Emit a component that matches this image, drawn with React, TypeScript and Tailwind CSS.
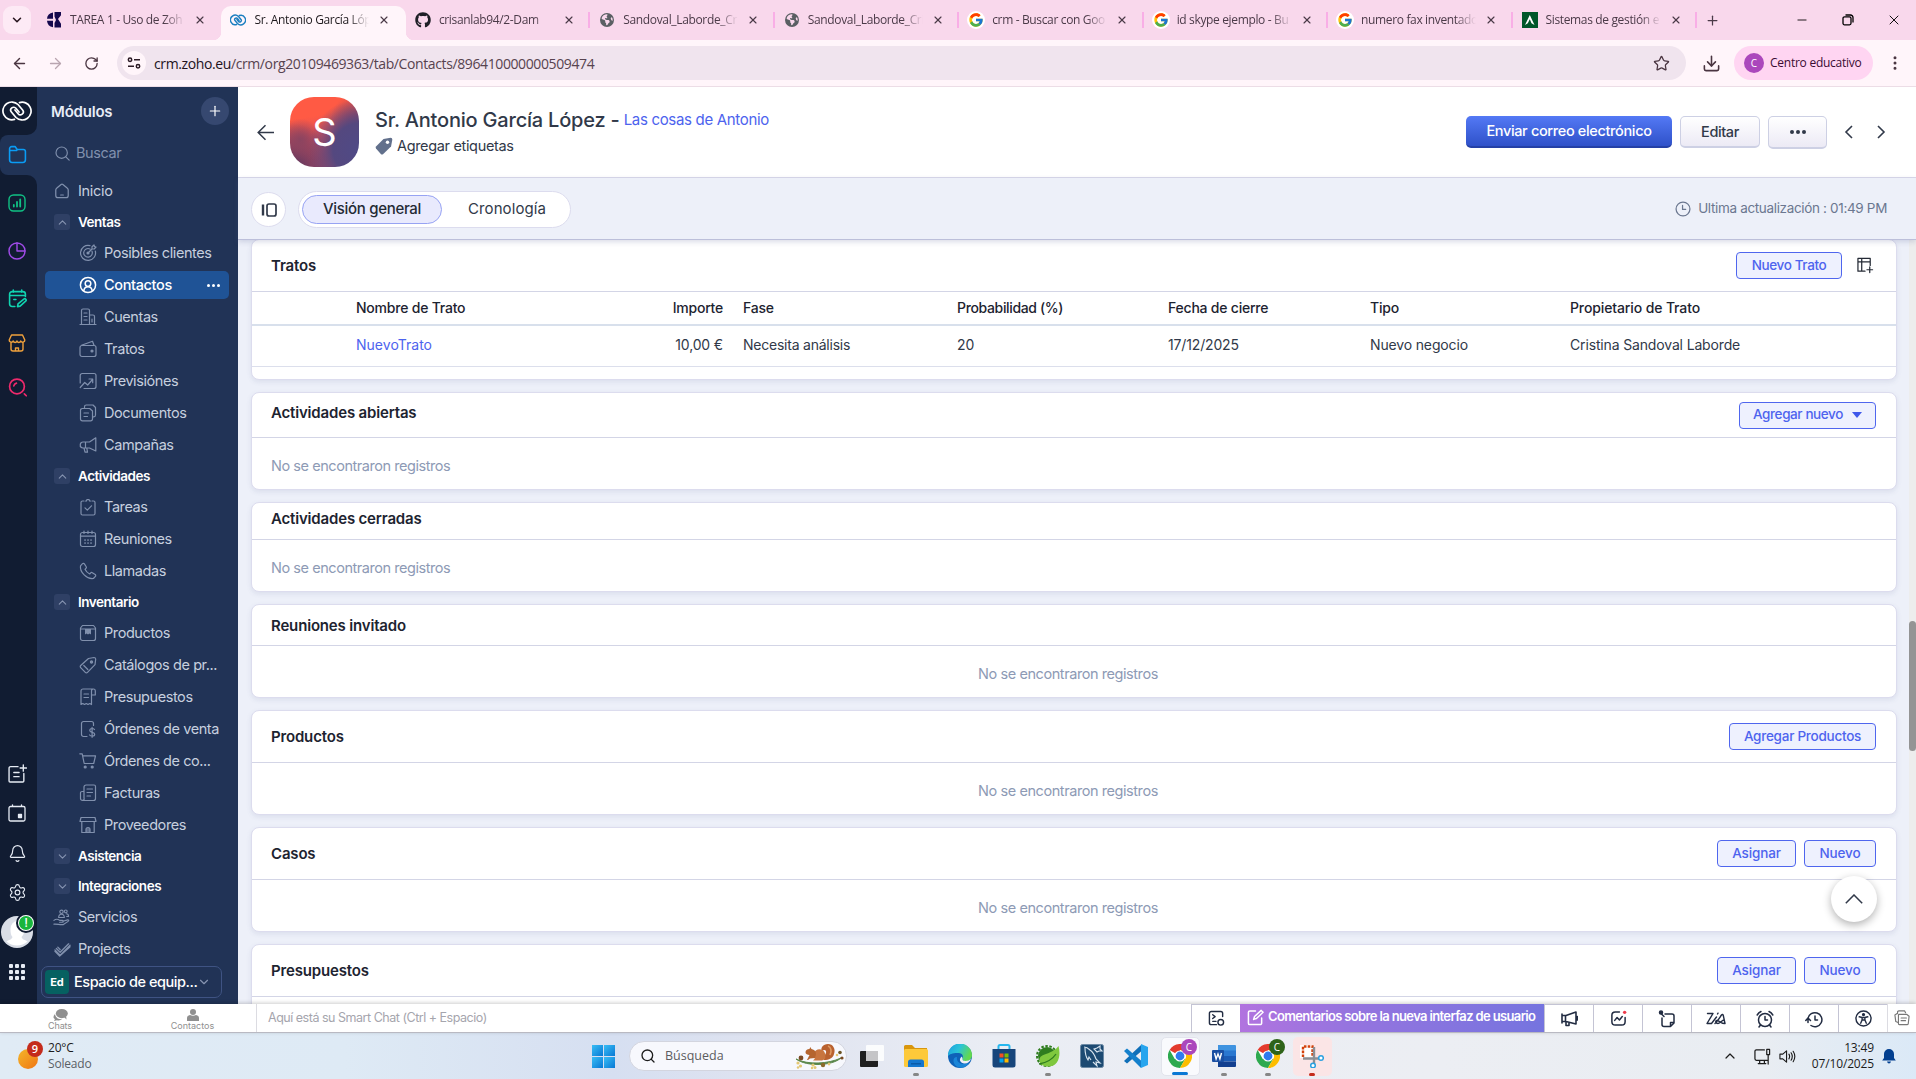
import React from "react";
import {
  ArrowLeft, ArrowRight, RotateCw, Star, Download, EllipsisVertical, Plus, X, ChevronDown, ChevronUp,
  Search, Minus, Bell, Settings,
} from "lucide-react";
import { FaGithub, FaEarthAmericas } from "react-icons/fa6";
import { FcGoogle } from "react-icons/fc";

type Kids = { children?: React.ReactNode };

function Ico({ children, size = 18, sw = 1.2, className = "" }: Kids & { size?: number; sw?: number; className?: string }) {
  return (
    <svg width={size} height={size} viewBox="0 0 18 18" fill="none" stroke="currentColor" strokeWidth={sw}
      strokeLinecap="round" strokeLinejoin="round" className={"shrink-0 " + className}>
      {children}
    </svg>
  );
}

/* ---------- Browser ---------- */

function ZohoLoop({ color, w, h, sw }: { color: string; w: number; h: number; sw: number }) {
  return (
    <svg width={w} height={h} viewBox="0 0 30 22" fill="none" stroke={color} strokeWidth={sw} strokeLinecap="round" strokeLinejoin="round">
      <path d="M12.500 19.400A8.900 8.900 0 1 1 16 4.500L20.600 10a2.900 2.900 0 0 1-4.500 3.700L13 10" />
      <path d="M17.500 2.600A8.900 8.900 0 1 1 14 17.500L9.400 12a2.900 2.900 0 0 1 4.500-3.700L17 12" />
    </svg>
  );
}

const google = <span className="flex size-[18px] items-center justify-center rounded-full bg-white"><FcGoogle size={16} /></span>;
const globe = <FaEarthAmericas size={14} color="#5a5f63" />;

const tabs: { t: string; icon: React.ReactNode; active?: boolean; sep?: boolean }[] = [
  { t: "TAREA 1 - Uso de Zoh", icon: (
    <svg width="15" height="16" viewBox="0 0 15 16" fill="#15084d"><path d="M0 6.800A7 7 0 0 1 6 .5v6.300zM0 8.800h6v6.400a7 7 0 0 1-6-6.400zM7.500 0H14v3.200L11 7 14 11.800V15.500H7.500V11l1.500-3-1.500-3.400z" /></svg>) },
  { t: "Sr. Antonio García Lóp", icon: <ZohoLoop color="#1c7fc0" w={16} h={14} sw={2.600} />, active: true },
  { t: "crisanlab94/2-Dam", icon: <FaGithub size={16} color="#1f1f27" />, sep: true },
  { t: "Sandoval_Laborde_Cri", icon: globe, sep: true },
  { t: "Sandoval_Laborde_Cri", icon: globe, sep: true },
  { t: "crm - Buscar con Goo", icon: google, sep: true },
  { t: "id skype ejemplo - Bu", icon: google, sep: true },
  { t: "numero fax inventado", icon: google, sep: true },
  { t: "Sistemas de gestión e", icon: (
    <svg width="16" height="16" viewBox="0 0 16 16"><rect width="16" height="16" fill="#00572a" /><path d="M3 13 7.800 3l4.700 10-3-1.800-1.700-4-2 4z" fill="#fff" /></svg>), sep: true },
];

function TabStrip() {
  return (
    <div className="flex h-10 items-center bg-[#f9d8ec] font-[Open_Sans,sans-serif] text-[#4b3a48]">
      <div className="ml-[3px] flex h-7 w-7 shrink-0 items-center justify-center rounded-[9px] bg-[#fdeaf5]">
        <ChevronDown size={14} strokeWidth={2.600} className="text-[#27161f]" />
      </div>
      <div className="ml-[6px] flex h-full">
        {tabs.map((tab, i) => (
          <div key={i} className="relative flex h-full w-[184.450px] items-center">
            {tab.active && (
              <div className="absolute inset-x-0 bottom-0 top-[6px] rounded-t-[10px] bg-[#fff5fa]">
                <div className="absolute bottom-0 -left-2 size-2 bg-[radial-gradient(circle_at_0_0,#f9d8ec_8px,#fff5fa_8.500px)]" />
                <div className="absolute bottom-0 -right-2 size-2 bg-[radial-gradient(circle_at_100%_0,#f9d8ec_8px,#fff5fa_8.500px)]" />
              </div>
            )}
            <div className="relative ml-[8px] flex w-[18px] justify-center">{tab.icon}</div>
            <div className={"relative ml-[7px] w-[115px] whitespace-nowrap text-[12px] tracking-[-0.350px] [mask-image:linear-gradient(90deg,#000_82%,transparent)] " + (tab.active ? "text-[#1f1a1e]" : "")}>{tab.t}</div>
            <X size={12} strokeWidth={2.300} className="relative ml-[9px]" />
            {tab.sep && <div className="absolute right-0 h-4 w-[2px] bg-[#f9aee6]" />}
          </div>
        ))}
      </div>
      <Plus size={15} strokeWidth={2} className="ml-[8px]" />
      <div className="ml-auto flex items-center text-black">
        <Minus size={14} strokeWidth={1.500} />
        <svg width="12" height="12" viewBox="0 0 12 12" fill="none" stroke="#000" strokeWidth="1.300" className="ml-[33px]"><rect x="1" y="2.800" width="8" height="8" rx="1.500" /><path d="M3.500 1h5A2.500 2.500 0 0 1 11 3.500v5" /></svg>
        <X size={16} strokeWidth={1.400} className="ml-[32px] mr-[14px]" />
      </div>
    </div>
  );
}

function AddressBar() {
  return (
    <div className="flex h-[47px] items-center border-b border-[#ecdde6] bg-[#fff5fa] font-[Open_Sans,sans-serif] text-[#57434f]">
      <ArrowLeft size={17} strokeWidth={2} className="ml-[11px] text-[#4a3541]" />
      <ArrowRight size={17} strokeWidth={1.800} className="ml-[19px] text-[#b9a5b0]" />
      <RotateCw size={15} strokeWidth={2.100} className="ml-[20px] text-[#4a3541]" />
      <div className="ml-[18px] flex h-[34px] w-[1569px] items-center rounded-full bg-[#f0e4ee] pl-[5px]">
        <div className="flex size-6 items-center justify-center rounded-full bg-[#fff5fa]">
          <svg width="14" height="12" viewBox="0 0 14 12" fill="none" stroke="#2c1c26" strokeWidth="1.500"><circle cx="3" cy="2.700" r="1.700" /><path d="M7 2.700h6M1 9.300h6" /><circle cx="11" cy="9.300" r="1.700" /></svg>
        </div>
        <div className="ml-2 whitespace-nowrap text-[14px] tracking-[-0.390px]"><span className="text-[#21121c]">crm.zoho.eu</span>/crm/org20109469363/tab/Contacts/896410000000509474</div>
        <Star size={17} strokeWidth={1.800} className="ml-auto mr-[16px] text-[#4a3541]" />
      </div>
      <Download size={19} strokeWidth={2} className="ml-[16px] text-[#4a3541]" />
      <div className="ml-[13px] flex h-[34px] w-[139px] items-center rounded-full bg-[#ffd5f2] pl-[10px]">
        <div className="flex size-5 items-center justify-center rounded-full bg-[#ab47bc] text-[10px] text-white">C</div>
        <div className="ml-[6px] whitespace-nowrap text-[12px] tracking-[-0.250px] text-[#3a0b33]">Centro educativo</div>
      </div>
      <EllipsisVertical size={18} strokeWidth={2} className="ml-[13px] text-[#4a3541]" />
    </div>
  );
}

/* ---------- Left rail ---------- */

function Rail() {
  return (
    <div className="flex w-[37px] shrink-0 flex-col bg-[#213356]">
      <div className="flex h-12 items-center justify-center rounded-br-[10px] bg-[#111c32] pr-[3px]">
        <ZohoLoop color="#fff" w={30} h={22} sw={1.700} />
      </div>
      <div className="h-10 bg-[#111c32]">
        <div className="flex h-full items-center rounded-l-[8px] bg-[#213356] pb-[1px] pl-[8px]">
          <Ico size={19} sw={1.500} className="text-[#0a9cf5]"><path d="M1.500 14V3.500a2 2 0 0 1 2-2h3.200l2 2.700h5.800a2 2 0 0 1 2 2V14a2.500 2.500 0 0 1-2.500 2.500H4A2.500 2.500 0 0 1 1.500 14zM1.500 5.200h6.800" /></Ico>
        </div>
      </div>
      <div className="flex flex-1 flex-col items-center rounded-tr-[10px] bg-[#111c32] pr-[3px]">
        <Ico size={18} sw={1.400} className="mt-[19px] text-[#10c184]"><rect x="1" y="1" width="16" height="16" rx="4.500" /><path d="M5.800 12.500v-1.500M9 12.500V8M12.200 12.500v-7" strokeWidth="1.800" /></Ico>
        <Ico size={18} sw={1.400} className="mt-[30px] text-[#a04be8]"><circle cx="9" cy="9" r="8" /><path d="M9 1v8h8" /></Ico>
        <Ico size={19} sw={1.500} className="mt-[29px] text-[#10d3b0]"><path d="M16.500 7V5a2.500 2.500 0 0 0-2.500-2.500H4A2.500 2.500 0 0 0 1.500 5v9A2.500 2.500 0 0 0 4 16.500h2.500M1.500 6.200h15M5 1v2M13 1v2M5.500 10h2M9.500 14l5.500-4.500a1.300 1.300 0 0 1 1.700 2L11.500 16.200l-2.500.5z" /></Ico>
        <Ico size={18} sw={1.400} className="mt-[26px] text-[#f0a13c]"><path d="M3.500 1h11L16.800 6c.2 2.200-3 3-4 1-1 2-3 2-3.800 0-.8 2-2.800 2-3.800 0-1 2-4.200 1.200-4-1zM3 8.500V15a2 2 0 0 0 2 2h8a2 2 0 0 0 2-2V8.500M7.500 17v-3h3v3" /></Ico>
        <Ico size={19} sw={1.600} className="mt-[26px] text-[#ef2a6c]"><circle cx="8.500" cy="8" r="7" /><path d="M5.500 7.500a3.500 3.500 0 0 1 2.500-2.600M15.500 15l1.800 1.800" /></Ico>
        <div className="mt-auto flex flex-col items-center text-[#e6ebf4]">
          <Ico size={19} sw={1.300} className="mb-[21px]"><path d="M9.500 2.500h-7a1.500 1.500 0 0 0-1.500 1.500v12a1 1 0 0 0 1 1h12a1 1 0 0 0 1-1V9M5.500 8h5M5.500 12h5M14.500.8v6M11.500 3.800h6" /></Ico>
          <Ico size={18} sw={1.300} className="mb-[22px]"><rect x="1" y="2.500" width="16" height="14.500" rx="1.500" /><path d="M4.500.8v1.500M13.500.8v1.500" /><rect x="10.500" y="10.500" width="3" height="3" fill="currentColor" /></Ico>
          <Bell size={19} strokeWidth={1.500} className="mb-[20px]" />
          <Settings size={19} strokeWidth={1.400} className="mb-[14px]" />
          <div className="relative mb-[16px] size-8 overflow-visible rounded-full">
            <svg width="32" height="32" viewBox="0 0 32 32"><circle cx="16" cy="16" r="16" fill="#d9dde6" /><path d="M9.500 13a7 8 0 0 1 14 0c0 4-1.500 6.500-3 8 .5 2.500 4 3 6 4.500a16 16 0 0 1-21 0c2-1.500 5.500-2 6-4.500-1.500-1.500-2-4-2-8z" fill="#fff" /></svg>
            <div className="absolute -top-[3px] left-[15px] flex size-[20px] items-center justify-center rounded-full border-[2px] border-[#111c32] bg-white">
              <div className="flex size-[14px] items-center justify-center rounded-full bg-[#18b53c] font-[Roboto,sans-serif] text-[12px] font-medium leading-none text-white">!</div>
            </div>
          </div>
          <div className="mb-[24px] grid grid-cols-3 gap-[2px]">
            {Array.from({ length: 9 }, (_, i) => <div key={i} className="size-[4px] rounded-[1px] bg-[#e6ebf4]" />)}
          </div>
        </div>
      </div>
    </div>
  );
}

/* ---------- Sidebar ---------- */

const navIcons: Record<string, React.ReactNode> = {
  "Posibles clientes": <Ico><path d="M11 1.700A7.500 7.500 0 1 0 16.300 7M11 5A4.300 4.300 0 1 0 13 7.200M9 9l4-4M13 5V2.800l2-1.800.5 1.500 1.500.5-1.800 2zM9 8a1 1 0 1 0 1 1" /></Ico>,
  Contactos: <Ico><circle cx="9" cy="9" r="7.600" strokeWidth="1.500" /><circle cx="9" cy="7.600" r="2.800" strokeWidth="1.500" /><path d="M4.800 14.500c.5-2.500 1.800-3.800 4.200-3.800s3.700 1.300 4.200 3.800" strokeWidth="1.500" /></Ico>,
  Cuentas: <Ico><path d="M1 16.500h16M2.500 16.500V2.500a1.500 1.500 0 0 1 1.500-1.500h5a1.500 1.500 0 0 1 1.500 1.500v14M10.500 7h3.500a1.500 1.500 0 0 1 1.500 1.500v8M5 5h3M5 8.500h3M5 12h3M13 11v3" /></Ico>,
  Tratos: <Ico><rect x="1" y="5.500" width="16" height="11" rx="2" /><path d="M2.500 5.300 13.500 1.300l1.500 4" /><circle cx="13" cy="11" r="1" fill="currentColor" /></Ico>,
  Previsiónes: <Ico><path d="M1.200 11V3.500A2 2 0 0 1 3.200 1.500H15a2 2 0 0 1 2 2V14.500a2 2 0 0 1-2 2H5M1.200 15.500l4.500-5 3 2.500 4.800-5.500M10 7h3.700v3.700" /></Ico>,
  Documentos: <Ico><path d="M5.500 4V2.800A1.800 1.800 0 0 1 7.300 1H14l2.500 2.500V11a1.800 1.800 0 0 1-1.800 1.800h-1" /><path d="M3.300 4.500h7.400L13.500 7v8a1.800 1.800 0 0 1-1.800 1.800H3.300A1.800 1.800 0 0 1 1.500 15V6.300a1.800 1.800 0 0 1 1.800-1.800zM5 9h4.500M5 12.500h3.500" /></Ico>,
  Campañas: <Ico><path d="M16.800 1.800v13.200L10.500 12H4a2.700 2.700 0 0 1-2.700-2.700v-.6A2.700 2.700 0 0 1 4 6h6.500zM6.500 6v6M5 12.200l1 4h2.500l-.7-4M1.300 8v2.500" /></Ico>,
  Tareas: <Ico><path d="M5 3H3.500a1.500 1.500 0 0 0-1.500 1.500v11A1.500 1.500 0 0 0 3.500 17h11a1.500 1.500 0 0 0 1.500-1.500v-11A1.500 1.500 0 0 0 14.500 3H13M6.500 3h1l.5-1.500h2l.5 1.500h1M6 9.800l2.300 2.300 4.200-4.300" /></Ico>,
  Reuniones: <Ico><rect x="1.500" y="2.500" width="15" height="14" rx="2" /><path d="M1.500 6.200h15M5 1v2.500M9 1v2.500M13 1v2.500" /><path d="M6 10h.1M9 10h.1M12 10h.1M6 13h.1M9 13h.1M12 13h.1" strokeWidth="1.700" /></Ico>,
  Llamadas: <Ico><path d="M1.500 3.800 3.500 1.700a1.200 1.200 0 0 1 1.900.2l1.800 2.800a1.300 1.300 0 0 1-.2 1.600L6 7.300c1 2.200 2.600 3.700 4.700 4.700l1-1.100a1.300 1.300 0 0 1 1.600-.2l2.900 1.900a1.200 1.200 0 0 1 .2 1.800l-2 2.100C8 17.500.5 10 1.500 3.800z" /></Ico>,
  Productos: <Ico><path d="M3.500 1.500h11l2 2.500v10.500a2 2 0 0 1-2 2h-11a2 2 0 0 1-2-2V4zM1.500 5h15" /><path d="M6 5h6v5.500l-1.500-1-1.500 1-1.500-1-1.500 1z" fill="currentColor" stroke="none" /></Ico>,
  "Catálogos de pr...": <Ico><path d="M9.500 2.500 15 1.500c1 0 1.600.6 1.700 1.500L16 8.700l-7.500 7.600a1.500 1.500 0 0 1-2.200 0L1.700 11.700a1.500 1.500 0 0 1 0-2.200zM4.800 9.500l4 4" /><circle cx="12.500" cy="6" r="1.100" fill="currentColor" /></Ico>,
  Presupuestos: <Ico><path d="M12.500 13.500V3a1.800 1.800 0 0 1 3.800-.2V7h-3.800M14.500 1H4A2 2 0 0 0 2 3v13.500l1.800-1 1.700 1 1.800-1 1.700 1 1.800-1 1.700 1V12M5 6h4.500M5 9.500h4.500" /></Ico>,
  "Órdenes de venta": <Ico><path d="M8 16.500H4.500a2 2 0 0 1-2-2v-11a2 2 0 0 1 2-2h8a2 2 0 0 1 2 2v2" /><path d="M15.500 9.500c-.6-.9-1.500-1-2.500-1-1.300 0-2.200.7-2.200 1.900 0 2.700 4.900 1.200 4.900 3.900 0 1.200-1 1.900-2.500 1.900-1.200 0-2-.4-2.600-1.200M13.100 7.300v10" /></Ico>,
  "Órdenes de co...": <Ico><path d="M.8 1.800h2.400l2 9.700h9.500l1.800-7.700H3.600" /><circle cx="6.200" cy="15" r="1" fill="currentColor" /><circle cx="13.200" cy="15" r="1" fill="currentColor" /></Ico>,
  Facturas: <Ico><path d="M5 14V3a2 2 0 0 1 2-2h8a1.500 1.500 0 0 1 1.500 1.500v12a2 2 0 0 1-2 2h-11a2 2 0 0 1-2-2V9a1.500 1.500 0 0 1 1.500-1.500h2M5 14a1.600 1.600 0 0 1-1.500 2.400M8 5h5.500M8 8.500h5.500M8 12h3.500" /></Ico>,
  Proveedores: <Ico><path d="M2 1.500h14l1 4H1zM2.800 5.500v11h12.400v-11" /><path d="M7 16.500v-3a2 2 0 0 1 4 0v3z" fill="currentColor" fillOpacity=".6" /></Ico>,
};

function NavItem({ label }: { label: string }) {
  const active = label === "Contactos";
  return (
    <div className="flex h-8 items-center">
      <div className={"ml-2 flex h-7 w-[184px] items-center rounded-[5px] pl-[34px] " + (active ? "bg-[#1f5396] text-white" : "text-[#c6cfdf]")}>
        <span className={active ? "" : "text-[#8090ad]"}>{navIcons[label]}</span>
        <span className={"ml-[7px] whitespace-nowrap text-[14.500px] " + (active ? "font-medium tracking-[-0.350px]" : "tracking-[-0.420px]")}>{label}</span>
        {active && <span className="ml-auto mr-[9px] flex gap-[2px]"><i className="size-[3px] rounded-full bg-white" /><i className="size-[3px] rounded-full bg-white" /><i className="size-[3px] rounded-full bg-white" /></span>}
      </div>
    </div>
  );
}

function Group({ label, open, items = [] }: { label: string; open?: boolean; items?: string[] }) {
  return (
    <>
      <div className="flex h-[30px] items-center pl-[17px]">
        <div className="flex size-4 items-center justify-center rounded-[3px] bg-[#2f4065] text-[#8794b1]">
          {open ? <ChevronUp size={13} strokeWidth={2} /> : <ChevronDown size={13} strokeWidth={2} />}
        </div>
        <span className="ml-2 text-[13.500px] font-semibold tracking-[-0.480px] text-white">{label}</span>
      </div>
      {items.map((i) => <NavItem key={i} label={i} />)}
    </>
  );
}

function Sidebar() {
  return (
    <div className="flex w-[201px] shrink-0 flex-col bg-[#213356]">
      <div className="flex h-12 items-center pl-[14px] pr-[9px]">
        <span className="pt-[2px] text-[15px] font-semibold tracking-[-0.200px] text-[#e8edf7]">Módulos</span>
        <div className="ml-auto flex size-7 items-center justify-center rounded-full bg-[#364870] text-white"><Plus size={16} strokeWidth={1.800} /></div>
      </div>
      <div className="flex h-10 items-center pb-[4px] pl-[18px] text-[#8090ad]">
        <Ico size={15} sw={1.400}><circle cx="8" cy="8" r="6.800" /><path d="m13 13 4 4" /></Ico>
        <span className="ml-[6px] text-[14.500px] tracking-[-0.400px]">Buscar</span>
      </div>
      <div className="flex h-8 items-center pl-[17px] text-[#8090ad]">
        <Ico size={16} sw={1.400}><path d="M2 8c0-1 .4-1.800 1.200-2.400L8 1.600a1.600 1.600 0 0 1 2 0l4.800 4c.8.600 1.200 1.400 1.200 2.400v6a2.500 2.500 0 0 1-2.500 2.500h-9A2.500 2.500 0 0 1 2 14zM7.500 13.500h3" /></Ico>
        <span className="ml-2 text-[14.500px] tracking-[-0.300px] text-[#c6cfdf]">Inicio</span>
      </div>
      <Group label="Ventas" open items={["Posibles clientes", "Contactos", "Cuentas", "Tratos", "Previsiónes", "Documentos", "Campañas"]} />
      <Group label="Actividades" open items={["Tareas", "Reuniones", "Llamadas"]} />
      <Group label="Inventario" open items={["Productos", "Catálogos de pr...", "Presupuestos", "Órdenes de venta", "Órdenes de co...", "Facturas", "Proveedores"]} />
      <Group label="Asistencia" />
      <Group label="Integraciones" />
      <div className="flex h-8 items-center pl-[16px] text-[#8090ad]">
        <Ico size={17}><circle cx="9" cy="3" r="1.800" /><circle cx="13.500" cy="2.500" r="1.500" /><path d="M6 9c0-2.500 1-3.500 3-3.500S12 6.500 12 9zM14 5c1.800 0 2.500 1 2.500 3h-2M1 12c2-1.500 4-1.500 6 0h3a1 1 0 0 1 0 2H7M10.500 13l5-1.500c1.500 0 1.500 1 .5 1.600L11 16.500c-4 .5-6-.8-10-.5" /></Ico>
        <span className="ml-2 text-[14.500px] tracking-[-0.450px] text-[#c6cfdf]">Servicios</span>
      </div>
      <div className="flex h-8 items-center pl-[17px] text-[#8090ad]">
        <Ico size={17} sw={1.400}><path d="M1 9.500 6.500 15 17 4.500M2.500 8 6.500 12 15.500 3M4 6.500 6.500 9M1 11l5 5L17 6" /></Ico>
        <span className="ml-[7px] text-[14.500px] tracking-[-0.400px] text-[#c6cfdf]">Projects</span>
      </div>
      <div className="ml-1 mt-px flex h-8 w-[181px] items-center rounded-[7px] border border-[#3f5383] pl-[3px]">
        <div className="flex size-6 items-center justify-center rounded-[4px] bg-[#066161] text-[11px] font-bold text-white">Ed</div>
        <span className="ml-[5px] whitespace-nowrap text-[14.500px] font-medium tracking-[-0.450px] text-white">Espacio de equip...</span>
        <ChevronDown size={14} strokeWidth={2} className="shrink-0 text-[#8794b1]" />
      </div>
    </div>
  );
}

/* ---------- Main ---------- */

function ContactHeader() {
  return (
    <div className="flex h-[91px] shrink-0 items-center border-b border-[#d8d8ea] bg-white text-[#313949]">
      <svg width="17" height="17" viewBox="0 0 17 17" fill="none" stroke="#313949" strokeWidth="1.500" className="ml-[19px]"><path d="M17 8.500H1.500M8.500 1.200 1.200 8.500l7.300 7.300" /></svg>
      <div className="ml-[16px] flex h-[70px] w-[69px] items-center justify-center rounded-[24px] bg-[radial-gradient(circle_at_100%_75%,#4f4a86_0%,#54487f_30%,transparent_58%),radial-gradient(circle_at_15%_62%,#8b4460_0%,transparent_30%),radial-gradient(circle_at_0%_100%,#54355f_0%,transparent_45%),radial-gradient(circle_at_100%_35%,#933f60_0%,transparent_35%),linear-gradient(170deg,#ff5a44_28%,#d94e58_55%,#a34a67_100%)] text-[38px] text-white">S</div>
      <div className="ml-[16px] flex flex-col pt-[2px]">
        <div className="flex h-[26px] items-center whitespace-nowrap">
          <span className="text-[20px] font-medium tracking-[-0.200px]">Sr. Antonio García López -</span>
          <span className="ml-[4px] pt-[1px] text-[15px] tracking-[-0.320px] text-[#4d63ee]">Las cosas de Antonio</span>
        </div>
        <div className="flex h-[26px] items-center">
          <svg width="18" height="18" viewBox="0 0 18 18"><path d="M8.500 2 15.500.800q2 0 1.800 2L16 9.500 8 17.200q-1 .8-2 0L1 11.500q-.8-1 0-2z" fill="#62708c" /><circle cx="12.500" cy="5.200" r="1.700" fill="#fff" /></svg>
          <span className="ml-[4px] text-[14.500px] tracking-[-0.340px]">Agregar etiquetas</span>
        </div>
      </div>
      <div className="ml-auto flex items-center gap-2 text-[14.500px] font-medium">
        <div className="flex h-8 w-[206px] items-center justify-center rounded-[5px] border-b-2 border-[#2440a6] bg-linear-to-b from-[#5479f5] to-[#2f51c9] tracking-[-0.350px] text-white">Enviar correo electrónico</div>
        <div className="flex h-8 w-20 items-center justify-center rounded-[5px] border border-b-2 border-[#cdd0e4] bg-linear-to-b from-white to-[#eceaf5] tracking-[-0.400px]">Editar</div>
        <div className="flex h-[33px] w-[59px] items-center justify-center gap-[2px] rounded-[5px] border border-b-2 border-[#cdd0e4] bg-linear-to-b from-white to-[#eceaf5]">
          <i className="size-1 rounded-full bg-[#313949]" /><i className="size-1 rounded-full bg-[#313949]" /><i className="size-1 rounded-full bg-[#313949]" />
        </div>
      </div>
      <svg width="9" height="14" viewBox="0 0 9 14" fill="none" stroke="#313949" strokeWidth="1.600" className="ml-[17px]"><path d="M8 1 2 7l6 6" /></svg>
      <svg width="9" height="14" viewBox="0 0 9 14" fill="none" stroke="#313949" strokeWidth="1.600" className="ml-[24px] mr-[30px]"><path d="m1 1 6 6-6 6" /></svg>
    </div>
  );
}

function ViewSwitch() {
  return (
    <div className="relative z-10 flex h-[62px] shrink-0 items-center border-b border-[#bcbfda] bg-[#edf0f9] text-[#313949] shadow-[0_2px_5px_rgba(90,100,150,0.220)]">
      <div className="ml-[13px] mt-[2px] flex size-[35px] items-center justify-center rounded-full border border-[#dcdcee] bg-white">
        <svg width="16" height="14" viewBox="0 0 16 14" fill="none" stroke="#313949" strokeWidth="1.700"><path d="M2 1.500v11" strokeWidth="2.400" /><rect x="6" y="1" width="9" height="12" rx="2" /></svg>
      </div>
      <div className="ml-[12px] mt-px flex h-[37px] w-[273px] items-center rounded-full border border-[#dcdcee] bg-white pl-[3px] text-[15px]">
        <div className="flex h-[29px] w-[140px] items-center justify-center rounded-full border border-[#97a3f3] bg-[#e9eafd] font-medium tracking-[-0.300px] text-[#242a35]">Visión general</div>
        <div className="ml-[26px] tracking-[0.100px]">Cronología</div>
      </div>
      <div className="ml-auto mr-[29px] flex items-center text-[#6b7790]">
        <Ico size={16} sw={1.400}><circle cx="9" cy="9" r="7.800" /><path d="M8.500 5v4.500H12" /></Ico>
        <span className="ml-[7px] text-[13.500px] tracking-[-0.340px]">Ultima actualización : 01:49 PM</span>
      </div>
    </div>
  );
}

function Btn({ children, w, track = "tracking-[-0.250px]" }: Kids & { w: string; track?: string }) {
  return <div className={"flex h-[27px] items-center justify-center rounded-[4px] border border-[#4f66ee] bg-[#eef1fe] pb-px text-[13.500px] font-medium text-[#4d63ee] " + track + " " + w}>{children}</div>;
}

const cardBase = "flex shrink-0 flex-col rounded-[8px] border border-[#dcdcee] bg-white shadow-[0_2px_5px_rgba(90,100,150,0.120)] ";
const titleText = "text-[15px] font-semibold tracking-[-0.170px] text-[#1d2330] ";

function Card({ title, h, head, actions, centered, shift = "pt-[2px]" }: { title: string; h: string; head: string; actions?: React.ReactNode; centered?: boolean; shift?: string }) {
  return (
    <div className={cardBase + "mt-[12px] " + h}>
      <div className={"flex shrink-0 items-center border-b border-[#d3d5e6] pl-[19px] pr-[20px] " + head}>
        <span className={titleText + shift}>{title}</span>
        <div className="ml-auto flex gap-2">{actions}</div>
      </div>
      <div className={"flex flex-1 items-center pl-[19px] text-[14.500px] text-[#8d9ab5] " + (centered ? "justify-center pr-[31px] pt-[5px] tracking-[-0.430px]" : "pt-[4px] tracking-[-0.450px]")}>No se encontraron registros</div>
    </div>
  );
}

const cols = "grid grid-cols-[104px_367px_20px_214px_211px_202px_200px_1fr] items-center whitespace-nowrap text-[14px] ";

function Deals() {
  return (
    <div className={cardBase + "h-[141px]"}>
      <div className="flex h-[52px] items-center border-b border-[#d3d5e6] pl-[19px] pr-[22px]">
        <span className={titleText + "pt-[2px]"}>Tratos</span>
        <div className="ml-auto"><Btn w="w-[106px]" track="tracking-[-0.380px]">Nuevo Trato</Btn></div>
        <Ico size={17} sw={1.300} className="ml-[15px] text-[#242a35]"><path d="M8.500 15H1V1.500h13V9M1 5.200h13M5 1.500V15M13.500 10.500v6M10.500 13.500h6" /></Ico>
      </div>
      <div className={cols + "h-[34px] border-b-2 border-[#d8e0ec] pb-[2px] font-medium tracking-[-0.220px] text-[#1d2330]"}>
        <span /><div className="flex justify-between"><span>Nombre de Trato</span><span>Importe</span></div><span />
        <span>Fase</span><span className="tracking-[-0.350px]">Probabilidad (%)</span><span>Fecha de cierre</span><span>Tipo</span><span className="tracking-[-0.120px]">Propietario de Trato</span>
      </div>
      <div className={cols + "h-[41px] border-b border-[#dcdfec] pb-[3px] tracking-[-0.150px] text-[#313949]"}>
        <span /><div className="flex justify-between"><span className="tracking-[0.020px] text-[#4d63ee]">NuevoTrato</span><span>10,00 €</span></div><span />
        <span className="tracking-[-0.230px]">Necesita análisis</span><span>20</span><span>17/12/2025</span><span>Nuevo negocio</span><span>Cristina Sandoval Laborde</span>
      </div>
    </div>
  );
}

function Main() {
  const pair = <><Btn w="w-[79px]" track="tracking-[-0.150px]">Asignar</Btn><Btn w="w-[72px]" track="tracking-[-0.150px]">Nuevo</Btn></>;
  return (
    <div className="relative flex min-w-0 flex-1 flex-col">
      <ContactHeader />
      <ViewSwitch />
      <div className="flex min-h-0 flex-1 bg-[#edf0f9]">
        <div className="-mt-px flex flex-1 flex-col overflow-hidden pl-[13px] pr-[12px]">
          <Deals />
          <Card title="Actividades abiertas" h="h-[98px]" head="h-[45px]" shift="pb-[3px]" actions={<Btn w="w-[137px]" track="tracking-[-0.400px]">Agregar nuevo<svg width="10" height="6" viewBox="0 0 10 6" className="ml-[9px]"><path d="M0 0h10L5 6z" fill="#3f58ea" /></svg></Btn>} />
          <Card title="Actividades cerradas" h="h-[90px]" head="h-[37px]" shift="pb-[3px]" />
          <Card title="Reuniones invitado" h="h-[94px]" head="h-[41px]" centered />
          <Card title="Productos" h="h-[105px]" head="h-[52px]" centered actions={<Btn w="w-[147px]">Agregar Productos</Btn>} />
          <Card title="Casos" h="h-[105px]" head="h-[52px]" centered actions={pair} />
          <Card title="Presupuestos" h="h-[105px]" head="h-[52px]" centered actions={pair} />
        </div>
        <div className="w-[7px] bg-[#ededed] pt-[381px]"><div className="h-[130px] rounded-[4px] bg-[#949494]" /></div>
      </div>
      <div className="absolute bottom-[82px] right-[39px] flex size-[46px] items-center justify-center rounded-full bg-white shadow-[0_3px_9px_rgba(0,0,0,0.300)]">
        <svg width="18" height="10" viewBox="0 0 18 10" fill="none" stroke="#313949" strokeWidth="1.500"><path d="M.8 9.300 9 1l8.200 8.300" /></svg>
      </div>
    </div>
  );
}

/* ---------- Smart chat bar ---------- */

function ChatBar() {
  const cells: React.ReactNode[] = [
    <Ico key="a" size={18} sw={1.600}><path d="M16 2v12L6 11.500H2V5.500h4zM2 4v9M5.500 6v5M6 12v3.500h3V12.500M17.300 6.500v3.500" /></Ico>,
    <Ico key="b" size={17} sw={1.600}><path d="M10 2H5.500A3.500 3.500 0 0 0 2 5.500v7A3.500 3.500 0 0 0 5.500 16h7a3.500 3.500 0 0 0 3.500-3.500V8M5 11l2.500-3 2.500 2.500L13 7" /><circle cx="15.500" cy="2.500" r="1.800" fill="#ee3b4b" stroke="none" /></Ico>,
    <Ico key="c" size={18} sw={1.500}><path d="M7 4h7a2 2 0 0 1 2 2v7l-3.500 3.500H6a2 2 0 0 1-2-2V8M16 12.500h-3.500v4M2 2.500l4 4" /><circle cx="3" cy="2.500" r="1.500" fill="currentColor" /></Ico>,
    <svg key="d" width="20" height="13" viewBox="0 0 20 13" fill="none" stroke="currentColor" strokeWidth="1.400" strokeLinecap="round" strokeLinejoin="round"><path d="M1.500 1.500H7L1 11.500h4.500L10.500 5M12 1.200 11.500 2M9 11.500C12 9 14 5 15.500 3c.8-1 1.500-.5 1.800.5l1.700 8C16 12 13 8.500 11 8.500s-1.500 3 1 3 4-3.500 6-3.500" /></svg>,
    <Ico key="e" size={18} sw={1.500}><circle cx="9" cy="10" r="6.500" /><path d="M9 6.500V10h2.500M1.200 5A9 9 0 0 1 5 1.500M16.800 5A9 9 0 0 0 13 1.500M4.500 15 3 17M13.500 15l1.500 2" /></Ico>,
    <Ico key="f" size={18} sw={1.500}><path d="M3 8.500A7 7 0 1 1 6 15.500M10 6v4h2.500M.8 10.500 3 8l2.500 2.500M3 8v4.500" /></Ico>,
    <Ico key="g" size={17} sw={1.500}><circle cx="9" cy="9" r="8" /><circle cx="9" cy="4.800" r="1" fill="currentColor" /><path d="M4.500 7.200 7.500 8h3l3-.8M7.500 8v2.500L6 14M10.500 8v2.500L12 14M8 10.500h2" /></Ico>,
  ];
  return (
    <div className="relative z-10 flex h-[29px] shrink-0 border-b border-[#b9b9c2] bg-white text-[#222c42] shadow-[0_-1px_4px_rgba(0,0,0,0.200)]">
      <div className="flex w-[120px] flex-col items-center pt-[5px] text-[9px] leading-[9px] tracking-[-0.100px] text-[#8f8f8f]">
        <svg width="15" height="12" viewBox="0 0 15 12" fill="#8f8f8f"><ellipse cx="8.800" cy="4.600" rx="6" ry="4.600" /><path d="M2 5c-2 2-2 4 0 5l-1 2 3-.8c2 .5 4 0 5-1C5 10.500 2.500 8.500 2 5zM11 8l2.500 2.500-.3-3z" /></svg>
        <span>Chats</span>
      </div>
      <div className="flex w-[137px] flex-col items-center border-r border-[#dcdce2] pl-[9px] pt-[5px] text-[9px] leading-[9px] text-[#8f8f8f]">
        <svg width="12" height="12" viewBox="0 0 12 12" fill="#8f8f8f"><circle cx="6" cy="3" r="3" /><path d="M0 12V9q0-2.500 3-3 3 1.500 6 0 3 .5 3 3v3z" /></svg>
        <span>Contactos</span>
      </div>
      <div className="flex items-center pl-[11px] text-[12.500px] tracking-[-0.480px] text-[#a5a5ad]">Aquí está su Smart Chat (Ctrl + Espacio)</div>
      <div className="ml-auto flex w-[49px] items-center justify-center border-l border-t border-[#c4c4d4]">
        <Ico size={17} sw={1.500}><path d="M9 15.500H3.500a2 2 0 0 1-2-2v-10a2 2 0 0 1 2-2h10a2 2 0 0 1 2 2V7M5 5l2.500 2L5 9M5 12h3.500" /><circle cx="13.500" cy="13" r="3" /></Ico>
      </div>
      <div className="flex w-[304px] items-center bg-linear-to-r from-[#b173df] via-[#9674df] via-35% to-[#7574df] pb-[2px] pl-[7px] text-[13px] font-semibold tracking-[-0.640px] text-white">
        <Ico size={17} sw={1.600}><path d="M9 2H3a1.500 1.500 0 0 0-1.500 1.500V15A1.500 1.500 0 0 0 3 16.500h11a1.500 1.500 0 0 0 1.500-1.500V9.500M7 11l1-3L15 1.500 17 3.500 10 10z" /></Ico>
        <span className="ml-[4px] whitespace-nowrap">Comentarios sobre la nueva interfaz de usuario</span>
      </div>
      {cells.map((c, i) => <div key={i} className="flex w-[49px] items-center justify-center border-l border-t border-[#c4c4d4]">{c}</div>)}
      <div className="flex w-[29px] items-center justify-center border-l border-[#dcdce2] text-[#777]"><Ico size={16} sw={1.300}><path d="M4 4V2.500A1.500 1.500 0 0 1 5.500 1H12l1 2M6 5h8.500L17 7l-1 8.500a1 1 0 0 1-1 1H6a1 1 0 0 1-1-1V6a1 1 0 0 1 1-1zM8 9h6M8 12h5M4.500 14 2 13 1 5.500 3.500 4" /></Ico></div>
    </div>
  );
}

/* ---------- Taskbar ---------- */

function Chrome({ badge, letter }: { badge: string; letter: string }) {
  return (
    <div className="relative size-6">
      <svg width="24" height="24" viewBox="0 0 24 24"><circle cx="12" cy="12" r="12" fill="#fff" /><path d="M12 12 1.600 6A12 12 0 0 1 22.400 6H12z" fill="#e33b2e" /><path d="M12 0a12 12 0 0 1 10.400 6H12z" fill="#e33b2e" /><path d="M1.600 6A12 12 0 0 0 12 24l5.200-9L12 12 6.800 15z" fill="#2da94f" /><path d="M22.400 6A12 12 0 0 1 12 24l5.200-9A6 6 0 0 0 17 8.700L12 6z" fill="#fdbd00" /><circle cx="12" cy="12" r="5.600" fill="#fff" /><circle cx="12" cy="12" r="4.400" fill="#2f7bee" /></svg>
      <div className={"absolute -right-[5px] -top-[5px] flex size-4 items-center justify-center rounded-full text-[10px] text-white " + badge}>{letter}</div>
    </div>
  );
}

function Task({ children, box = "", dot = "" }: Kids & { box?: string; dot?: string }) {
  return (
    <div className="flex h-full w-11 items-center justify-center">
      <div className={"relative flex h-[39px] w-[39px] items-center justify-center rounded-[5px] " + box}>
        {children}
        {dot && <div className={"absolute bottom-0 h-[3px] rounded-full " + dot} />}
      </div>
    </div>
  );
}

function Squirrel() {
  return (
    <svg width="50" height="27" viewBox="0 0 50 27">
      <path d="M2 16c12 6 32 5 45-1-9 8-34 9-45 1z" fill="#4f7d4a" stroke="#5e8a4c" strokeWidth="1" />
      <path d="M30 17c-2-3 3-6 2-9-1-2-4-1-4 1-2-4 1-8 6-8s8 5 6 10c-1 4-5 6-10 6z" fill="#b9612f" />
      <path d="M34 3c3 1 4 5 2 9" stroke="#df9a63" strokeWidth="1.600" fill="none" />
      <path d="M19 11c2-4 6-6 9-4 3 1 4 5 3 9l-3 1.500h-9l2-2c-2-1-3-2.500-2-4.500z" fill="#c8753f" />
      <path d="M11.500 9.500c0-2 1.500-3.500 4-3.500l.7-2 1.300 2c3 .5 4.500 2.500 4.500 5l-1 4-5 .500-2 1.500h-1l1.500-3 1-2c-2 0-4-1-4-2.500z" fill="#b5652f" />
      <circle cx="7" cy="15" r="2.400" fill="#7b4a24" /><circle cx="46" cy="9.500" r="1.800" fill="#6b5424" /><circle cx="29" cy="22" r="2.200" fill="#8a6a2a" /><circle cx="48" cy="15" r="1.600" fill="#7b4a24" />
      <g fill="#e3c774"><circle cx="4" cy="20" r="1.600" /><circle cx="6.500" cy="23" r="1.600" /><circle cx="4" cy="24.500" r="1.200" /><circle cx="19" cy="22" r="1.600" /><circle cx="21" cy="24.500" r="1.500" /><circle cx="18" cy="25" r="1.200" /><circle cx="35" cy="21" r="1.400" /><circle cx="43" cy="12" r="1.300" /></g>
    </svg>
  );
}

function Taskbar() {
  return (
    <div className="relative flex h-[46px] shrink-0 bg-[linear-gradient(90deg,#e0ebf5_0%,#deeaf5_18%,#d6dff1_32%,#dfe3f0_40%,#eaedf4_52%,#eceef3_75%,#e9edf2_92%,#dbe9f7_100%)] font-[Open_Sans,sans-serif] text-[#1c1c1c]">
      <div className="flex w-[581px] items-center pl-[17px]">
        <div className="relative h-8 w-7">
          <div className="absolute left-[1px] top-[9px] size-5 rounded-full bg-linear-to-br from-[#f3b62a] to-[#ef7413]" />
          <div className="absolute left-[10px] top-[1px] flex size-4 items-center justify-center rounded-full bg-[#c42b1c] text-[11px] font-semibold text-white">9</div>
        </div>
        <div className="ml-[3px] text-[12px] leading-4 tracking-[-0.200px]"><div>20°C</div><div className="text-[#5a5f66]">Soleado</div></div>
      </div>
      <Task><div className="grid grid-cols-2 gap-px">{[0, 1, 2, 3].map((i) => <div key={i} className="size-[11px] bg-linear-to-br from-[#38bdf5] to-[#0778d4]" />)}</div></Task>
      <div className="ml-[4px] mt-[8px] flex h-[30px] w-[218px] items-center rounded-full border border-[#d3d5df] bg-[#f7f8fd] pl-[10px]">
        <Search size={16} strokeWidth={2} />
        <span className="ml-[9px] text-[12.500px] text-[#5c5c60]">Búsqueda</span>
        <div className="ml-auto pr-[2px]"><Squirrel /></div>
      </div>
      <div className="ml-[3px] flex">
        <Task><svg width="24" height="22" viewBox="0 0 24 22"><rect x="0" y="6" width="18" height="16" rx="1" fill="#1f1f1f" /><rect x="6" y="0" width="18" height="16" rx="1" fill="#fff" fillOpacity=".85" /><rect x="6" y="6" width="12" height="10" fill="#c5c5c7" /></svg></Task>
        <Task dot="w-[6px] bg-[#868686]"><svg width="24" height="22" viewBox="0 0 24 22"><path d="M0 1.500Q0 0 1.500 0H8l3 3h12v5H0z" fill="#d9960c" /><rect y="4" width="24" height="18" rx="1.500" fill="#fdc93a" /><path d="M4 22v-5q0-2.500 2.500-2.500h11Q20 14.500 20 17v5z" fill="#1577cf" /><path d="M7 18h10v1.500H7z" fill="#0b5ba8" /></svg></Task>
        <Task><svg width="24" height="24" viewBox="0 0 24 24"><defs><linearGradient id="eg" x1="0" y1="0" x2="1" y2=".4"><stop offset="0" stopColor="#1c9ee0" /><stop offset=".5" stopColor="#2bc3d8" /><stop offset="1" stopColor="#62d84f" /></linearGradient></defs><circle cx="12" cy="12" r="12" fill="#0f62b8" /><path d="M0 12A12 12 0 0 1 24 11c0 4-3 6-6.500 6-2.500 0-3.500-1-3-2.500 1-2 .5-5-3.500-5.500C6 8.500 1 10 0 12z" fill="url(#eg)" /><path d="M9 13c-1 5 4 9 12 6-3 5-9 6-13 3-4-4-3-9 1-9z" fill="#1b86d8" /><path d="M14.500 14.500q-.5 2.500 3 2.500 3 0 5.500-2c-1 3-4 5-7 4.500-5-1-5-5-2-7z" fill="#eef0f5" /></svg></Task>
        <Task><svg width="24" height="24" viewBox="0 0 24 24"><path d="M6.500 6V2.500Q6.500 1 8 1h8q1.500 0 1.500 1.500V6" fill="none" stroke="#27b7ee" strokeWidth="2" /><path d="M.5 5h23v16q0 2.500-2.500 2.500H3Q.5 23.500.5 21z" fill="#17457b" /><path d="M7.500 9.500H11.500v4H7.500z" fill="#f25022" /><path d="M12.500 9.500h4v4h-4z" fill="#7fba00" /><path d="M7.500 14.500h4v4h-4z" fill="#00a4ef" /><path d="M12.500 14.500h4v4h-4z" fill="#ffb900" /></svg></Task>
        <Task dot="w-[6px] bg-[#868686]"><svg width="24" height="24" viewBox="0 0 24 24"><circle cx="11" cy="12" r="9" fill="#2f7d1f" /><circle cx="11" cy="12" r="10" fill="none" stroke="#2f7d1f" strokeWidth="2" strokeDasharray="2.500 1.600" /><path d="M22.500 2C25 11 23 22.500 12 22.500c-5 0-9-2.500-8.500-7C4 9 16 11 22.500 2z" fill="#7fc83e" /><path d="M3 20c6-1 13-4 17-10" stroke="#2f7d1f" strokeWidth="1.300" fill="none" /></svg></Task>
        <Task><svg width="24" height="24" viewBox="0 0 24 24"><rect x=".5" y=".5" width="23" height="23" rx="2" fill="#1d4a72" stroke="#6d8aa5" /><path d="M4 3c3 0 4 1 6 3 3 2 5 6 6 9l4 4-4-1 1 4-4-4M5 4c0 5 1 9 3 12l1-3 2 3M14 5l3-1 3-2v3l2 2h-3l-2 1z" fill="none" stroke="#d7e3ee" strokeWidth="1.100" /></svg></Task>
        <Task><svg width="24" height="24" viewBox="0 0 24 24"><path d="M17 0v7.500L3 19.500 0 17l17-16z" fill="#0f6fb8" /><path d="m0 7 3-2.500L17 16.500V24L0 7z" fill="#1480cc" /><path d="M17 0l7 3v18l-7 3z" fill="#27a5ee" /></svg></Task>
        <Task box="border border-[#e2e4ec] bg-[#f9fafd]" dot="w-4 bg-[#0a78d4]"><Chrome badge="bg-[#ab47bc]" letter="C" /></Task>
        <Task dot="w-[6px] bg-[#868686]"><svg width="24" height="22" viewBox="0 0 24 22"><path d="M6 0h17q1 0 1 1v5H6z" fill="#3f93e0" /><path d="M6 5.500h18V11H6z" fill="#2a77d0" /><path d="M6 11h18v5.500H6z" fill="#1b5bb5" /><path d="M6 16.500h18V21q0 1-1 1H6z" fill="#123f8f" /><rect y="5" width="12" height="12" rx="1" fill="#1a4fa3" /><path d="m2.500 8 1.600 6L6 9l1.900 5 1.600-6" fill="none" stroke="#fff" strokeWidth="1.400" /></svg></Task>
        <Task dot="w-[6px] bg-[#868686]"><Chrome badge="bg-[#2e6319]" letter="C" /></Task>
        <Task box="bg-[#fbe5e6]" dot="w-[6px] bg-[#c42b1c]"><svg width="24" height="24" viewBox="0 0 24 24"><rect x="0" y="1" width="14" height="13" fill="#fff" /><path d="M3 13V2.500h9.500V13" fill="none" stroke="#d4420c" strokeWidth="2.400" strokeDasharray="2.600 1.200" /><path d="M14 3v17M3 14.500h18" stroke="#8c8f94" strokeWidth="2.400" fill="none" /><circle cx="21" cy="14" r="2.300" fill="#fff" stroke="#2ba0e0" strokeWidth="1.500" /><circle cx="13" cy="21.500" r="2.300" fill="#fff" stroke="#2ba0e0" strokeWidth="1.500" /></svg></Task>
      </div>
      <div className="ml-auto flex items-center">
        <ChevronUp size={16} strokeWidth={1.800} />
        <Ico size={17} sw={1.300} className="ml-[16px]"><path d="M11 2H2.500A1.500 1.500 0 0 0 1 3.500v8A1.500 1.500 0 0 0 2.500 13H14M6 13v3M11 13v3M4.500 16.500h8M13.500 1.500h3V7h-3zM15 7v10" /></Ico>
        <Ico size={17} sw={1.200} className="ml-[8px]"><path d="M1 6.500v5h3L8 15V3L4 6.500zM10.500 6.500q1.500 2.500 0 5M12.800 5q2.500 4 0 8M15 3.500q3.500 5.500 0 11" /></Ico>
        <div className="ml-[12px] w-[66px] whitespace-nowrap text-right text-[12px] leading-4 tracking-[-0.150px]"><div>13:49</div><div>07/10/2025</div></div>
        <svg width="14" height="16" viewBox="0 0 14 16" fill="#023f90" className="ml-[8px] mr-[20px]"><path d="M2 6a5 5 0 0 1 10 0v4l1.800 2.500H.2L2 10zM5 13.500h4q-.5 2-2 2t-2-2z" /></svg>
      </div>
    </div>
  );
}

export default function App() {
  return (
    <div className="flex h-[1079px] w-[1916px] flex-col overflow-hidden font-[Inter,sans-serif]">
      <TabStrip />
      <AddressBar />
      <div className="flex h-[917px] shrink-0">
        <Rail />
        <Sidebar />
        <Main />
      </div>
      <ChatBar />
      <Taskbar />
    </div>
  );
}
